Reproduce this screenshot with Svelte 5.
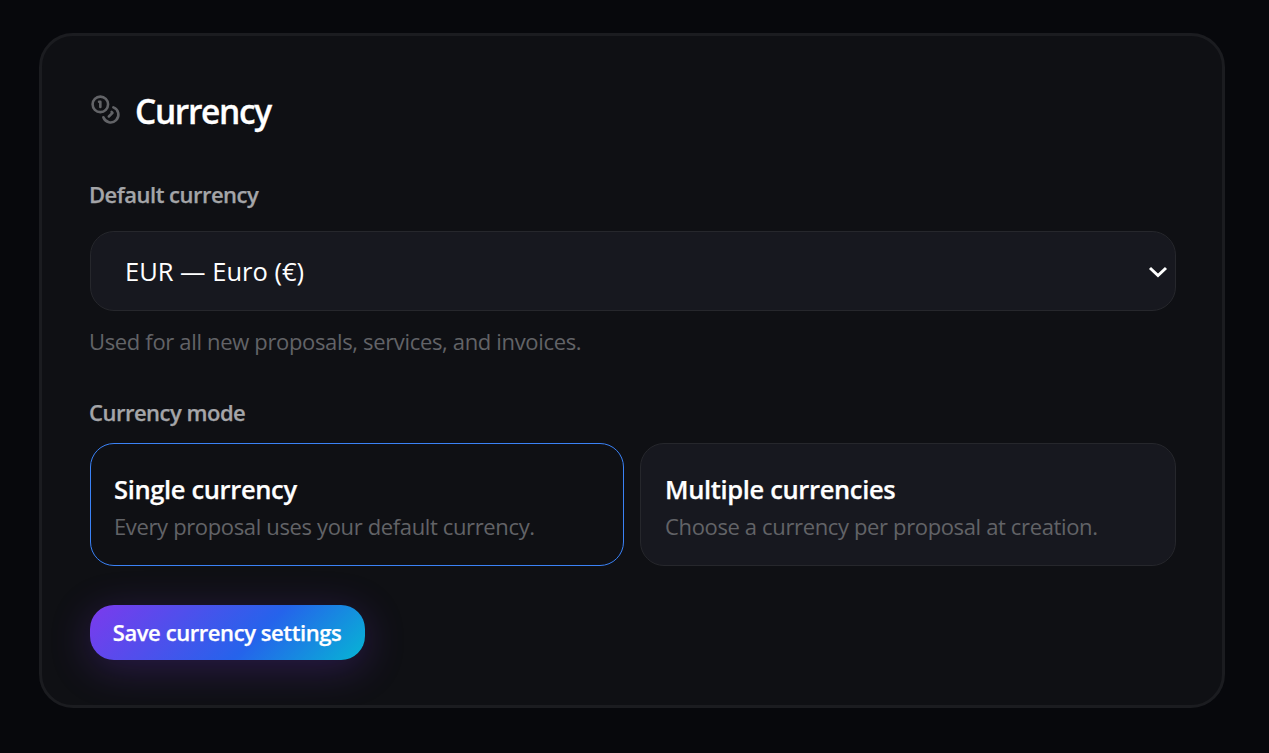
<script lang="ts">
  type Mode = 'single' | 'multiple';

  const currencies = [
    { code: 'EUR', name: 'Euro', symbol: '€' },
    { code: 'USD', name: 'US Dollar', symbol: '$' },
    { code: 'GBP', name: 'British Pound', symbol: '£' }
  ];

  const modes: { id: Mode; title: string; description: string }[] = [
    {
      id: 'single',
      title: 'Single currency',
      description: 'Every proposal uses your default currency.'
    },
    {
      id: 'multiple',
      title: 'Multiple currencies',
      description: 'Choose a currency per proposal at creation.'
    }
  ];

  let currency = $state('EUR');
  let mode = $state<Mode>('single');
</script>

<section class="card">
  <header>
    <svg class="coins" viewBox="0 0 24 24" aria-hidden="true">
      <circle cx="8" cy="8" r="6" />
      <path d="M18.09 10.37A6 6 0 1 1 10.34 18" />
      <path d="M7 6h1v4" />
      <path d="m16.71 13.88.7.71-2.82 2.82" />
    </svg>
    <h2>Currency</h2>
  </header>

  <label for="currency">Default currency</label>
  <div class="select">
    <select id="currency" bind:value={currency}>
      {#each currencies as c}
        <option value={c.code}>{c.code} — {c.name} ({c.symbol})</option>
      {/each}
    </select>
    <svg class="chevron" viewBox="0 0 20 12" aria-hidden="true">
      <path d="M2 2l8 7.5L18 2" />
    </svg>
  </div>
  <p class="hint">Used for all new proposals, services, and invoices.</p>

  <div class="label">Currency mode</div>
  <div class="modes">
    {#each modes as m}
      <button class="mode" class:active={mode === m.id} onclick={() => (mode = m.id)}>
        <span class="title">{m.title}</span>
        <span class="description">{m.description}</span>
      </button>
    {/each}
  </div>

  <button class="save">Save currency settings</button>
</section>

<style>
  :global(body) {
    background: #07080c;
  }

  .card {
    box-sizing: border-box;
    width: 1186px;
    height: 675px;
    margin: 33px 0 0 39px;
    padding: 57px 46px 0 48px;
    border: 3px solid #1b1c20;
    border-radius: 34px;
    background: #0f1014;
    color: #fff;
    font-family: 'Segoe UI', 'Open Sans', 'Noto Sans', sans-serif;
    overflow: hidden;
  }

  header {
    display: flex;
    align-items: center;
    gap: 14px;
    height: 36px;
  }

  .coins {
    width: 31px;
    height: 31px;
    margin-top: -4px;
    fill: none;
    stroke: #626367;
    stroke-width: 2;
    stroke-linecap: round;
    stroke-linejoin: round;
  }

  h2 {
    margin: -1px 0 0;
    font-size: 33.5px;
    font-weight: 600;
    line-height: 36px;
    letter-spacing: -1.35px;
    -webkit-text-stroke: 0.3px currentColor;
  }

  label,
  .label {
    display: block;
    height: 30px;
    margin-left: -1px;
    color: #a4a5a8;
    font-size: 22px;
    font-weight: 600;
    line-height: 30px;
    letter-spacing: -0.5px;
    -webkit-text-stroke: 0.25px currentColor;
  }

  label {
    margin-top: 50px;
    margin-bottom: 22px;
  }

  .select {
    position: relative;
    height: 80px;
  }

  select {
    box-sizing: border-box;
    width: 100%;
    height: 80px;
    padding: 0 34px;
    border: 1px solid #26272c;
    border-radius: 24px;
    background: #17181f;
    color: #fff;
    font: 25.5px 'Segoe UI', 'Open Sans', 'Noto Sans', sans-serif;
    letter-spacing: 0;
    appearance: none;
  }

  .chevron {
    position: absolute;
    top: 35px;
    right: 8px;
    width: 20px;
    height: 12px;
    fill: none;
    stroke: #fff;
    stroke-width: 3;
  }

  .hint {
    height: 30px;
    margin: 15px 0 41px -1px;
    color: #626367;
    font-size: 22px;
    line-height: 30px;
    letter-spacing: -0.34px;
  }

  .modes {
    display: grid;
    grid-template-columns: 534px 536px;
    gap: 16px;
    margin-top: 16px;
  }

  button {
    font-family: inherit;
    text-align: left;
    cursor: pointer;
  }

  .mode {
    display: flex;
    flex-direction: column;
    height: 123px;
    padding: 27px 23px 0;
    border: 1px solid #26272c;
    border-radius: 24px;
    background: #17181f;
    color: #fff;
  }

  .mode + .mode {
    padding-left: 24px;
  }

  .mode.active {
    border-color: #3b82f6;
    background: #0f1014;
  }

  .title {
    font-size: 25.5px;
    font-weight: 600;
    line-height: 36px;
    letter-spacing: -0.35px;
    -webkit-text-stroke: 0.25px currentColor;
  }

  .description {
    margin-top: 3px;
    color: #626367;
    font-size: 22px;
    line-height: 32px;
    letter-spacing: -0.36px;
    white-space: nowrap;
  }

  .save {
    width: 275px;
    height: 55px;
    margin-top: 39px;
    padding: 0 1px 2px 0;
    border: 0;
    border-radius: 24px;
    background: linear-gradient(135deg, #7c3aed 0%, #2563eb 60%, #06b6d4 100%);
    box-shadow: 0 8px 40px rgba(124, 58, 237, 0.26);
    color: #fff;
    font-size: 22px;
    font-weight: 600;
    letter-spacing: -0.42px;
    text-align: center;
    -webkit-text-stroke: 0.25px currentColor;
  }
</style>
